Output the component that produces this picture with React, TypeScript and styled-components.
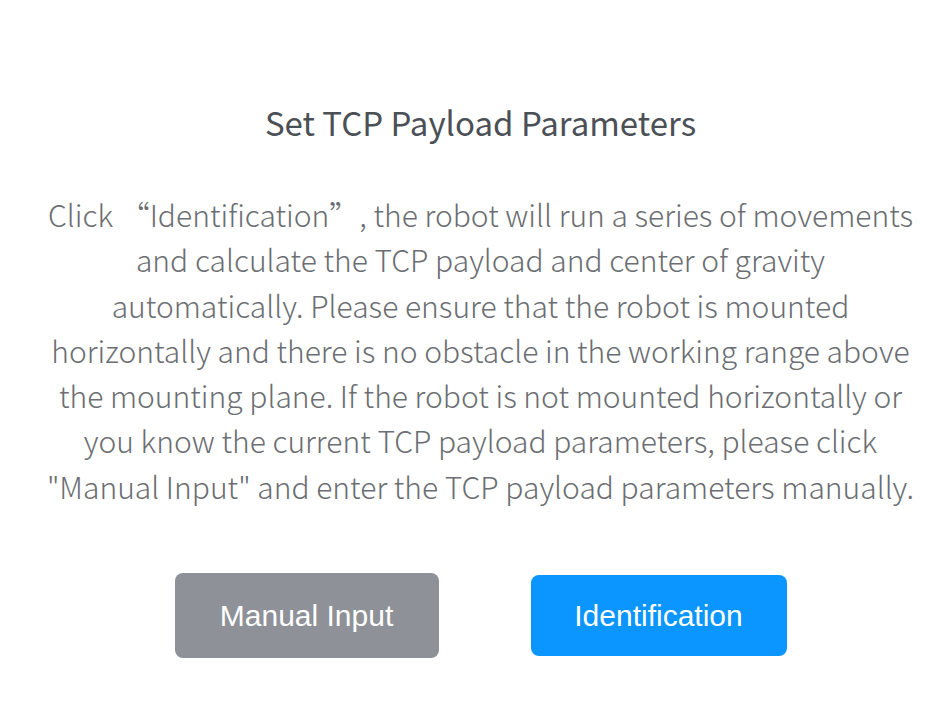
import styled, {createGlobalStyle} from "styled-components";

const GlobalStyle = createGlobalStyle`
  html, body {
    margin: 0;
    padding: 0;
    background: #ffffff;
  }
`

const Page = styled.div`
  width: 945px;
  height: 704px;
  box-sizing: border-box;
  padding: 97px 0 0 16px;
  display: flex;
  flex-direction: column;
  align-items: center;
  background: #ffffff;
`

const Title = styled.h2`
  margin: 0;
  font-family: "Noto Sans CJK SC", "Noto Sans", sans-serif;
  font-weight: 400;
  font-size: 33px;
  line-height: 50px;
  color: #4b5057;
`

const Description = styled.p`
  margin: 45px 0 0;
  font-family: "Noto Sans CJK SC", "Noto Sans", sans-serif;
  font-weight: 300;
  font-size: 30px;
  line-height: 45.3px;
  color: #6b6e72;
  text-align: center;

  span {
    display: block;
    white-space: nowrap;
  }
`

const ButtonRow = styled.div`
  margin-top: 64px;
  display: flex;
  align-items: center;
  gap: 92px;
`

const ActionButton = styled.button<{ $primary?: boolean }>`
  width: ${p => p.$primary ? "256px" : "264px"};
  height: ${p => p.$primary ? "81px" : "85px"};
  padding: 0;
  border: none;
  border-radius: 8px;
  background: ${p => p.$primary ? "#0a95ff" : "#8e9197"};
  color: #ffffff;
  font-family: "Liberation Sans", Arial, sans-serif;
  font-size: 30px;
  cursor: pointer;
`

const lines = [
    "Click \u201cIdentification\u201d, the robot will run a series of movements",
    "and calculate the TCP payload and center of gravity",
    "automatically. Please ensure that the robot is mounted",
    "horizontally and there is no obstacle in the working range above",
    "the mounting plane. If the robot is not mounted horizontally or",
    "you know the current TCP payload parameters, please click",
    "\"Manual Input\" and enter the TCP payload parameters manually.",
]

export default function App() {
    return (
        <>
            <GlobalStyle/>
            <Page>
                <Title>Set TCP Payload Parameters</Title>
                <Description>
                    {lines.map(line => <span key={line}>{line}</span>)}
                </Description>
                <ButtonRow>
                    <ActionButton>Manual Input</ActionButton>
                    <ActionButton $primary>Identification</ActionButton>
                </ButtonRow>
            </Page>
        </>
    )
}
